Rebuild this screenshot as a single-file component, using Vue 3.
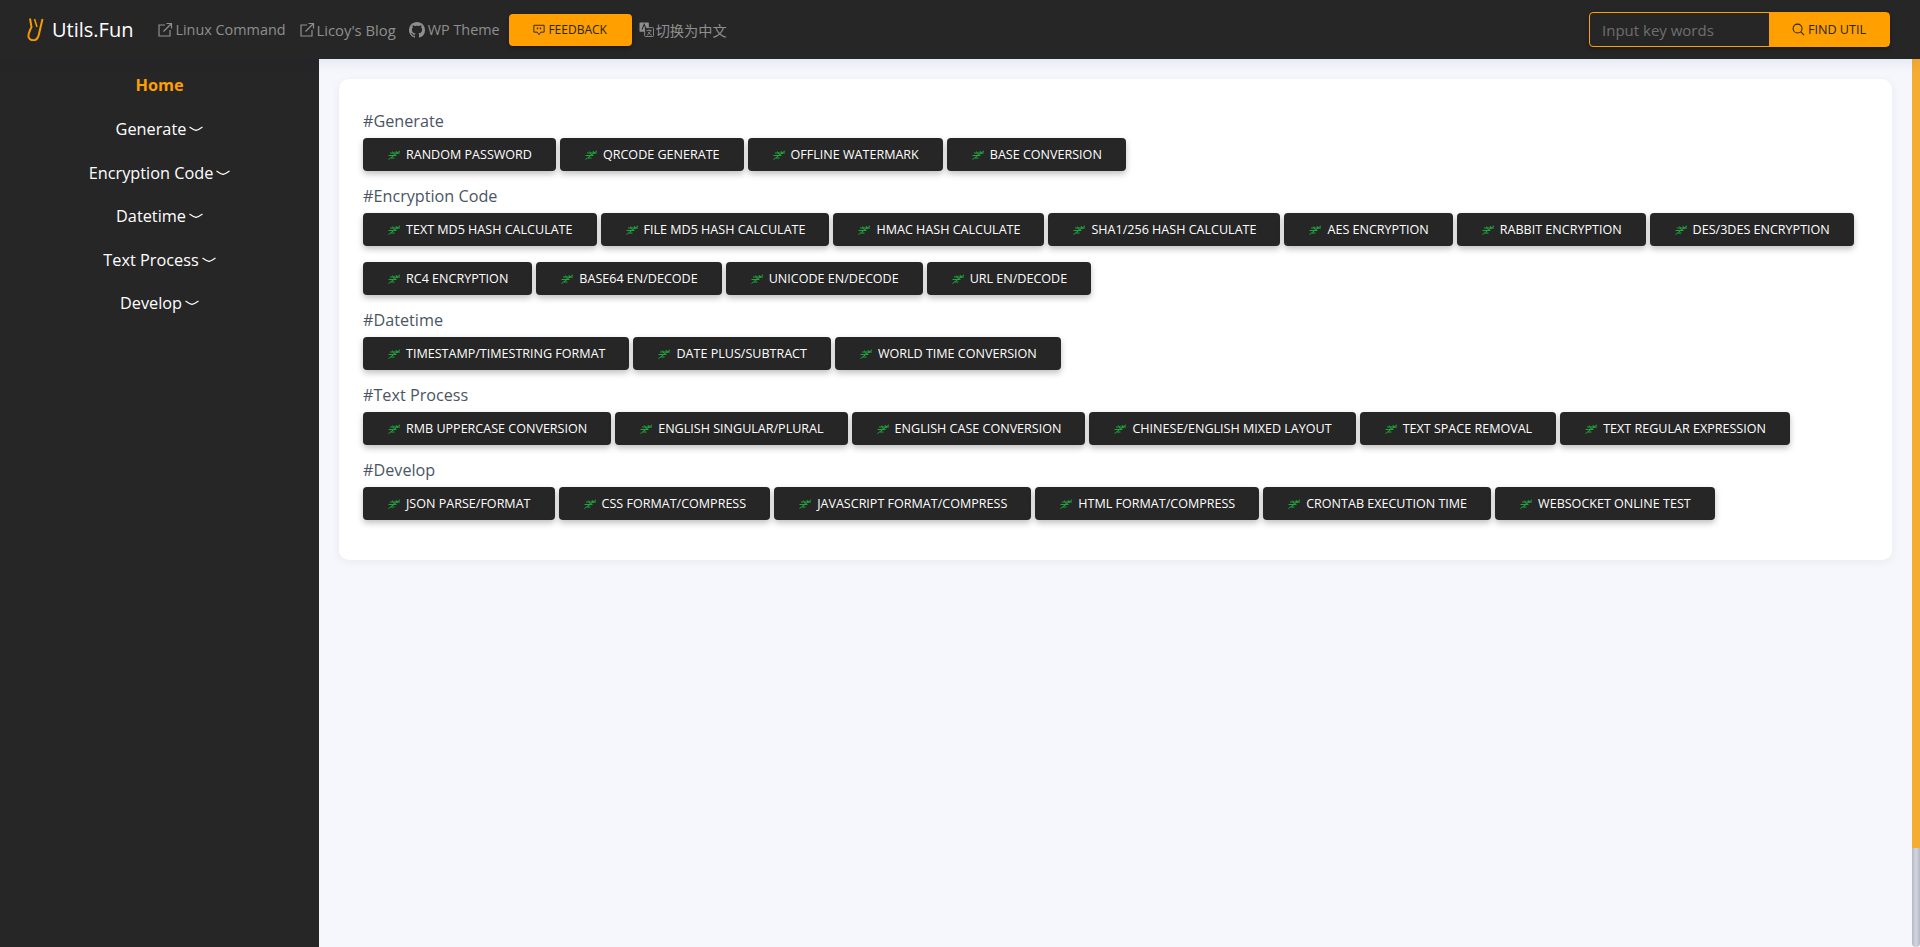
<script setup>
const menu = ['Generate', 'Encryption Code', 'Datetime', 'Text Process', 'Develop']

const groups = [
  { title: 'Generate', items: ['Random Password', 'QRCode Generate', 'Offline Watermark', 'Base Conversion'] },
  {
    title: 'Encryption Code',
    items: [
      'Text MD5 Hash Calculate', 'File MD5 Hash Calculate', 'HMAC Hash Calculate', 'SHA1/256 Hash Calculate',
      'AES Encryption', 'Rabbit Encryption', 'DES/3DES Encryption', 'RC4 Encryption', 'Base64 En/Decode',
      'Unicode En/Decode', 'URL En/Decode'
    ]
  },
  { title: 'Datetime', items: ['Timestamp/Timestring Format', 'Date Plus/Subtract', 'World Time Conversion'] },
  {
    title: 'Text Process',
    items: [
      'RMB Uppercase Conversion', 'English Singular/Plural', 'English Case Conversion',
      'Chinese/English Mixed Layout', 'Text Space Removal', 'Text Regular Expression'
    ]
  },
  {
    title: 'Develop',
    items: [
      'JSON Parse/Format', 'CSS Format/Compress', 'JavaScript Format/Compress', 'HTML Format/Compress',
      'Crontab Execution Time', 'WebSocket Online Test'
    ]
  }
]
</script>

<template>
  <div class="page">
    <header class="topbar">
      <div class="brand">
        <svg class="logo" viewBox="0 0 17 23" width="17" height="23" fill="none" stroke="#f59a00" stroke-width="2">
          <path d="M3 0.5 L4.5 9 Q1 16 1.5 19 Q3 23 8 22 Q11 21 12 16 L15.5 1" />
          <path d="M7.5 1 L10 9" stroke-width="1.5" />
        </svg>
        <span>Utils.Fun</span>
      </div>
      <a class="nav-link">
        <svg class="ext" viewBox="0 0 16 16" width="16" height="16" fill="none" stroke="currentColor" stroke-width="1.2">
          <path d="M8 3H2v11h11V8" /><path d="M6.5 9.5 14.5 1.5M9.5 1.5h5v5" />
        </svg>Linux Command
      </a>
      <a class="nav-link blog">
        <svg class="ext" viewBox="0 0 16 16" width="16" height="16" fill="none" stroke="currentColor" stroke-width="1.2">
          <path d="M8 3H2v11h11V8" /><path d="M6.5 9.5 14.5 1.5M9.5 1.5h5v5" />
        </svg>Licoy's Blog
      </a>
      <a class="nav-link theme">
        <svg class="gh" viewBox="0 0 16 16" width="16" height="16" fill="currentColor">
          <path d="M8 0C3.58 0 0 3.58 0 8c0 3.54 2.29 6.53 5.47 7.59.4.07.55-.17.55-.38 0-.19-.01-.82-.01-1.49-2.01.37-2.53-.49-2.69-.94-.09-.23-.48-.94-.82-1.13-.28-.15-.68-.52-.01-.53.63-.01 1.08.58 1.23.82.72 1.21 1.87.87 2.33.66.07-.52.28-.87.51-1.07-1.78-.2-3.64-.89-3.64-3.95 0-.87.31-1.59.82-2.15-.08-.2-.36-1.02.08-2.12 0 0 .67-.21 2.2.82.64-.18 1.32-.27 2-.27s1.36.09 2 .27c1.53-1.04 2.2-.82 2.2-.82.44 1.1.16 1.92.08 2.12.51.56.82 1.27.82 2.15 0 3.07-1.87 3.75-3.65 3.95.29.25.54.73.54 1.48 0 1.07-.01 1.93-.01 2.2 0 .21.15.46.55.38A8.01 8.01 0 0 0 16 8c0-4.42-3.58-8-8-8z" />
        </svg>WP Theme
      </a>
      <button class="feedback">
        <svg viewBox="0 0 14 14" width="12" height="12" fill="none" stroke="currentColor" stroke-width="1.1">
          <path d="M1 1.5h12v8H9L7 12.5 5 9.5H1z" />
          <path d="M4.5 5h1.5M8 5h1.5" stroke-width="2" />
        </svg>
        <span>FEEDBACK</span>
      </button>
      <a class="nav-link lang">
        <svg viewBox="0 0 16 16" width="15" height="15">
          <rect x="0.5" y="0.5" width="10" height="10" rx="1" fill="currentColor" />
          <rect x="6" y="6" width="9.5" height="9.5" rx="1" fill="#262626" stroke="currentColor" />
          <path d="M3.2 8 5.5 2.5 7.8 8" fill="none" stroke="#262626" stroke-width="1.1" />
          <path d="M8 9h5.5M10.7 8v1M12.5 9Q11.5 13 8.5 14M9.5 10.5Q11 13 13.8 14" fill="none" stroke="currentColor" stroke-width=".9" />
        </svg>切换为中文
      </a>
      <div class="search">
        <input class="search-input" placeholder="Input key words" />
        <button class="search-btn">
          <svg viewBox="0 0 14 14" width="13" height="13" fill="none" stroke="currentColor" stroke-width="1.1">
            <circle cx="6" cy="6" r="4.8" /><path d="M9.5 9.5 13 13" />
          </svg>
          <span>FIND UTIL</span>
        </button>
      </div>
    </header>

    <div class="body">
      <aside class="sidebar">
        <div class="menu-item active">Home</div>
        <div v-for="m in menu" :key="m" class="menu-item">
          {{ m }}
          <svg class="caret" viewBox="0 0 14 6" width="14" height="6" fill="none" stroke="#fff" stroke-width="1.1">
            <path d="M.5 1 Q4 3.6 7 4.4 Q10 3.6 13.5 1" />
          </svg>
        </div>
      </aside>

      <main class="content">
        <section class="card">
          <div v-for="g in groups" :key="g.title" class="group">
            <h3 class="group-title">#{{ g.title }}</h3>
            <div class="tools">
              <button v-for="item in g.items" :key="item" class="tool">
                <svg class="leaf" viewBox="0 0 14 10" width="14" height="10" fill="none" stroke="#1ea53c" stroke-width="1">
                  <path d="M1.5 9.5 13 .8" />
                  <path d="M3 3h10M1.5 5.5h8M4 8h3.5M5.5 1.5 8 6M9 1l1.5 3" />
                </svg>
                {{ item }}
              </button>
            </div>
          </div>
        </section>
      </main>
    </div>

    <div class="scrollbar"><div class="scroll-thumb"></div></div>
  </div>
</template>

<style>
html, body { margin: 0; height: 100%; overflow: hidden; }
</style>

<style scoped>
.page {
  position: relative;
  height: 947px;
  display: flex;
  flex-direction: column;
  font-family: "Open Sans", "Noto Sans", "Noto Sans CJK SC", sans-serif;
  background: #f5f7fc;
  overflow: hidden;
}

.topbar {
  position: relative;
  z-index: 2;
  flex: none;
  height: 59px;
  box-sizing: border-box;
  padding: 0 30px 0 27px;
  display: flex;
  align-items: center;
  background: #262626;
  box-shadow: 0 4px 12px rgba(30, 40, 80, 0.08);
}

.brand {
  display: flex;
  align-items: center;
  gap: 8px;
  color: #fff;
  font-size: 20px;
  margin-right: 24px;
}

.nav-link {
  display: flex;
  align-items: center;
  gap: 2px;
  color: #8f8f8f;
  font-size: 14.4px;
  margin-right: 13px;
  white-space: nowrap;
}
.nav-link.blog { font-size: 14.8px; }
.nav-link.theme { margin-right: 9px; }
.nav-link .gh { margin-right: 1px; }
.nav-link.lang { font-size: 14.2px; }

.feedback {
  width: 123px;
  height: 32px;
  margin-right: 7px;
  border: 0;
  border-radius: 4px;
  background: #ff9f00;
  color: #262626;
  font: inherit;
  font-size: 12px;
  display: flex;
  align-items: center;
  justify-content: center;
  gap: 3px;
  box-shadow: 0 2px 4px rgba(0, 0, 0, 0.3);
}

.search {
  margin-left: auto;
  width: 301px;
  height: 35px;
  display: flex;
  box-sizing: border-box;
  border: 1px solid #ff9f00;
  border-radius: 4px;
  box-shadow: 0 2px 4px rgba(0, 0, 0, 0.3);
}
.search-input {
  flex: 1;
  min-width: 0;
  border: 0;
  outline: 0;
  padding: 0 12px;
  background: transparent;
  font: inherit;
  font-size: 15px;
  color: #ccc;
}
.search-input::placeholder { color: #6f6f6f; opacity: 1; }
.search-btn {
  width: 120px;
  border: 0;
  background: #ff9f00;
  color: #262626;
  font: inherit;
  font-size: 12.6px;
  display: flex;
  align-items: center;
  justify-content: center;
  gap: 3px;
}

.body { flex: 1; display: flex; min-height: 0; }

.sidebar {
  flex: none;
  width: 319px;
  padding-top: 4.6px;
  background: #262626;
}
.menu-item {
  height: 43.6px;
  display: flex;
  align-items: center;
  justify-content: center;
  gap: 3px;
  color: #fff;
  font-size: 16.3px;
}
.menu-item.active {
  color: #ff9f00;
  font-weight: 700;
}

.content {
  flex: 1;
  min-width: 0;
  padding: 20px 28px 0 20px;
}

.card {
  background: #fff;
  border-radius: 10px;
  padding: 31px 24px 26px;
  box-shadow: 0 2px 10px rgba(30, 40, 80, 0.06);
}

.group-title {
  margin: 0;
  font-size: 16.2px;
  font-weight: 400;
  line-height: 22px;
  color: #4b5563;
}
.group { margin-bottom: 8.1px; }

.tools {
  display: flex;
  flex-wrap: wrap;
  gap: 16px 4px;
  padding-top: 6px;
  padding-bottom: 6px;
}

.tool {
  height: 33px;
  padding: 0 24px;
  border: 0;
  border-radius: 4px;
  background: #262626;
  color: #fff;
  font: inherit;
  font-size: 12.56px;
  text-transform: uppercase;
  display: flex;
  align-items: center;
  gap: 5px;
  white-space: nowrap;
  box-shadow: 0 3px 6px rgba(0, 0, 0, 0.25);
}

.scrollbar {
  position: absolute;
  right: 0;
  top: 0;
  bottom: 0;
  width: 8px;
  border-radius: 0 0 4px 4px;
  overflow: hidden;
  background: linear-gradient(90deg, #b4b8c3, #d3d6dd 50%, #b4b8c3);
}
.scroll-thumb {
  height: 848px;
  background: #f4ac33;
}
</style>
